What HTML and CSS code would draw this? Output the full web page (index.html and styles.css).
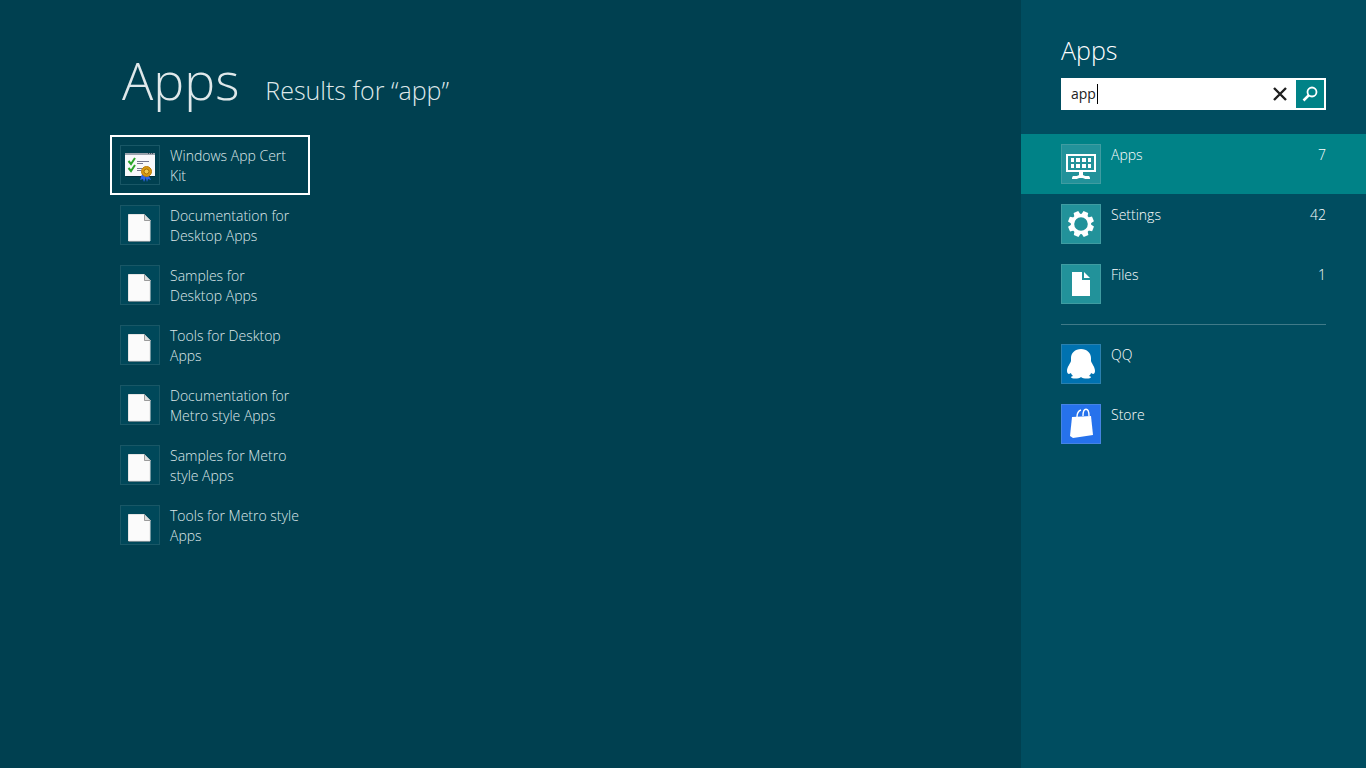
FILE: index.html
```html
<!DOCTYPE html>
<html lang="en">
<head>
    <meta charset="utf-8">
    <title>Apps</title>
    <link rel="stylesheet" href="styles.css">
</head>
<body>
    <svg class="symbols" aria-hidden="true">
        <symbol id="page" viewBox="0 0 38 38">
            <path d="M7 35h22v1H7z" fill="#001c26" opacity=".6"/>
            <path d="M7.500 8.500h15.500l6 6v20.500h-21.500z" fill="#fbfbfb" stroke="#e4e4e4"/>
            <path d="M23 8l7 7h-7z" fill="#dcdcdc"/>
            <path d="M23.500 8.500v6h6" fill="none" stroke="#9b9b9b"/>
        </symbol>
    </svg>

    <main class="results">
        <header class="results-header">
            <h1>Apps</h1>
            <h2>Results for “app”</h2>
        </header>
        <ul class="app-list">
            <li>
                <a class="app selected" href="#">
                    <svg class="tile" viewBox="0 0 38 38">
                        <path d="M5 30h29v1H5z" fill="#001c26" opacity=".5"/>
                        <path d="M4 7h30v23H4z" fill="#f8f8fb"/>
                        <path d="M4 7h30v2H4z" fill="#9aa3ad"/>
                        <path d="M27 7h1v1h-1zM29 7h1v1h-1zM31 7h1v1h-1z" fill="#40505e"/>
                        <path d="M16 15.500h12M16 17.500h6M16 22.500h5M16 24.500h4" stroke="#77788f" fill="none"/>
                        <path d="M7.500 15l2.500 3 4-6M7.500 22l2.500 3 4-6" stroke="#2ba52b" stroke-width="2" fill="none"/>
                        <path d="M21 28l-2 6 3-1 1 3 3-7zM27 28l3 6-3-1-1 3-2-7z" fill="#2f63e8"/>
                        <circle cx="25.500" cy="25.500" r="5" fill="#d99a12" stroke="#b97a08"/>
                        <circle cx="25.500" cy="25.500" r="2.500" fill="#f2c84b" stroke="#a66c05"/>
                    </svg>
                    <span>Windows App Cert<br>Kit</span>
                </a>
            </li>
            <li>
                <a class="app" href="#">
                    <svg class="tile"><use href="#page"/></svg>
                    <span>Documentation for<br>Desktop Apps</span>
                </a>
            </li>
            <li>
                <a class="app" href="#">
                    <svg class="tile"><use href="#page"/></svg>
                    <span>Samples for<br>Desktop Apps</span>
                </a>
            </li>
            <li>
                <a class="app" href="#">
                    <svg class="tile"><use href="#page"/></svg>
                    <span>Tools for Desktop<br>Apps</span>
                </a>
            </li>
            <li>
                <a class="app" href="#">
                    <svg class="tile"><use href="#page"/></svg>
                    <span>Documentation for<br>Metro style Apps</span>
                </a>
            </li>
            <li>
                <a class="app" href="#">
                    <svg class="tile"><use href="#page"/></svg>
                    <span>Samples for Metro<br>style Apps</span>
                </a>
            </li>
            <li>
                <a class="app" href="#">
                    <svg class="tile"><use href="#page"/></svg>
                    <span>Tools for Metro style<br>Apps</span>
                </a>
            </li>
        </ul>
    </main>

    <aside class="search-pane">
        <h2>Apps</h2>
        <form class="search-box">
            <input type="text" value="app" aria-label="Search apps">
            <button type="reset" class="clear" aria-label="Clear">
                <svg viewBox="0 0 16 16"><path d="M2 2l12 12M14 2L2 14" stroke="#1f1f1f" stroke-width="2.400" fill="none"/></svg>
            </button>
            <button type="submit" class="go" aria-label="Search">
                <svg viewBox="0 0 16 16" fill="none" stroke="#fff"><circle cx="10" cy="6" r="4.500" stroke-width="1.800"/><path d="M7 9L1.500 14.500" stroke-width="2.500"/></svg>
            </button>
        </form>
        <ul class="scopes">
            <li>
                <a class="scope active" href="#">
                    <svg class="tile teal" viewBox="0 0 38 38" fill="#fff">
                        <path fill-rule="evenodd" d="M4 9h30v18H4zM6 11v14h26V11z"/>
                        <path d="M9 13h3v4H9zM14 13h4v4h-4zM20 13h4v4h-4zM26 13h3v4h-3zM9 19h3v4H9zM14 19h4v4h-4zM20 19h4v4h-4zM26 19h3v4h-3z"/>
                        <path d="M17 27h4v3c1 1 3 1 6 1 1 1 1 2 1 3h-5c-1-1-2-1-4-1s-3 0-4 1h-5c0-1 0-2 1-3 3 0 5 0 6-1z"/>
                    </svg>
                    <span class="name">Apps</span>
                    <span>7</span>
                </a>
            </li>
            <li>
                <a class="scope" href="#">
                    <svg class="tile teal" viewBox="0 0 38 38">
                        <g fill="#fff">
                            <path id="teeth" d="M15.500 11l1-5h5l1 5zM15.500 27l1 5h5l1-5z" transform="rotate(22 19 19)"/>
                            <use href="#teeth" transform="rotate(45 19 19)"/>
                            <use href="#teeth" transform="rotate(90 19 19)"/>
                            <use href="#teeth" transform="rotate(135 19 19)"/>
                        </g>
                        <circle cx="19" cy="19" r="8.500" fill="none" stroke="#fff" stroke-width="3.400"/>
                    </svg>
                    <span class="name">Settings</span>
                    <span>42</span>
                </a>
            </li>
            <li>
                <a class="scope" href="#">
                    <svg class="tile teal" viewBox="0 0 38 38" fill="#fff">
                        <path d="M10 7h10v8h8v16H10z"/>
                        <path d="M22 7l6 6h-6z"/>
                    </svg>
                    <span class="name">Files</span>
                    <span>1</span>
                </a>
            </li>
        </ul>
        <hr>
        <ul class="scopes">
            <li>
                <a class="scope" href="#">
                    <svg class="tile qq" viewBox="0 0 38 38" fill="#fff">
                        <path d="M19 4c-6 0-10 4-10 9v3c-1 3-4 6-4 10 0 2 1 3 2 3l2-1c0 1 1 2 2 3-1 0-2 1-2 1 0 2 8 2 10 0 2 2 10 2 10 0 0 0-1-1-2-1 1-1 2-2 2-3l2 1c1 0 2-1 2-3 0-4-3-7-4-10v-3c0-5-4-9-10-9z"/>
                    </svg>
                    <span class="name">QQ</span>
                </a>
            </li>
            <li>
                <a class="scope" href="#">
                    <svg class="tile store" viewBox="0 0 38 38">
                        <path d="M10 12l19-1 2 19-20 3-3-2z" fill="#fff"/>
                        <path d="M15 12c0-4 1-6 4-7M21 11c0-9 6-9 6 0" fill="none" stroke="#fff" stroke-width="1.400"/>
                    </svg>
                    <span class="name">Store</span>
                </a>
            </li>
        </ul>
    </aside>
</body>
</html>
```
FILE: styles.css
```css
* {
    box-sizing: border-box;
}

body {
    margin: 0;
    min-height: 100vh;
    display: flex;
    background: #004050;
    color: #fff;
    font-family: "Open Sans", "Noto Sans", sans-serif;
    font-size: 14px;
    font-weight: 350;
    line-height: 20px;
}

h1, h2 {
    margin: 0;
    font-weight: 300;
}

ul {
    list-style: none;
    margin: 0;
    padding: 0;
}

a {
    color: inherit;
    text-decoration: none;
}

.symbols {
    display: none;
}

.tile {
    flex: none;
    width: 40px;
    height: 40px;
    border: 1px solid #195766;
    background: #00485a;
}

/* Results */
.results {
    flex: 1;
    padding: 43px 0 0 110px;
}

.results-header {
    display: flex;
    align-items: baseline;
    gap: 26px;
    padding-left: 12px;
    margin-bottom: 18px;
    color: #dfe8ea;
}

.results-header h1 {
    font-size: 52px;
    line-height: 74px;
}

.results-header h2 {
    font-size: 25px;
    line-height: 32px;
}

.app {
    display: flex;
    gap: 10px;
    width: 200px;
    height: 60px;
    padding: 8px;
    border: 2px solid transparent;
    color: #dfe8ea;
    white-space: nowrap;
}

.app span,
.scope span {
    padding-top: 1px;
}

.app.selected {
    border-color: #fff;
}

.app.selected .tile {
    background: #004050;
}

/* Search pane */
.search-pane {
    width: 345px;
    padding-top: 33px;
    background: #004d60;
}

.search-pane h2 {
    padding-left: 40px;
    font-size: 25px;
    font-weight: 350;
    line-height: 34px;
}

.search-box {
    display: flex;
    height: 32px;
    margin: 11px 40px 24px;
    padding: 2px;
    background: #fff;
}

.search-box input {
    flex: 1;
    min-width: 0;
    padding: 0 8px;
    border: none;
    outline: none;
    /* text caret after the typed word */
    background: linear-gradient(#000, #000) 34px 4px / 1px 20px no-repeat;
    color: #222;
    font: inherit;
    font-weight: 400;
}

.search-box button {
    display: grid;
    place-items: center;
    width: 28px;
    padding: 0;
    border: none;
    background: none;
}

.search-box svg {
    width: 16px;
    height: 16px;
}

.search-box .clear {
    width: 32px;
}

.search-box .go {
    background: #008287;
}

.scope {
    display: flex;
    gap: 10px;
    height: 60px;
    padding: 10px 40px;
}

.scope.active {
    background: #008287;
}

.scope .name {
    flex: 1;
}

.teal {
    background: #22929a;
    border-color: #3f9ca1;
}

.qq {
    background: #0072b0;
    border-color: #2a80ae;
}

.store {
    background: #2672ec;
    border-color: #4583e3;
}

hr {
    margin: 10px 40px 9px;
    border: none;
    border-top: 1px solid #407a88;
}
```
